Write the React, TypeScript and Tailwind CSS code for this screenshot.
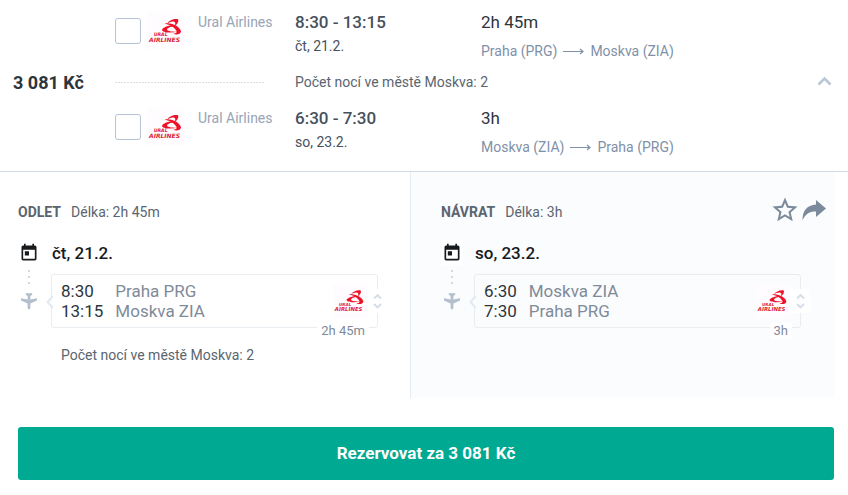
import { MdToday, MdStarBorder } from "react-icons/md";

type Leg = {
    heading: string;
    date: string;
    depart: string;
    arrive: string;
    duration: string;
    from: { city: string; code: string };
    to: { city: string; code: string };
    nights?: number;
};

const outbound: Leg = {
    heading: "ODLET",
    date: "čt, 21.2.",
    depart: "8:30",
    arrive: "13:15",
    duration: "2h 45m",
    from: { city: "Praha", code: "PRG" },
    to: { city: "Moskva", code: "ZIA" },
    nights: 2,
};

const inbound: Leg = {
    heading: "NÁVRAT",
    date: "so, 23.2.",
    depart: "6:30",
    arrive: "7:30",
    duration: "3h",
    from: { city: "Moskva", code: "ZIA" },
    to: { city: "Praha", code: "PRG" },
};

const AirlineLogo = ({ className }: { className: string }) => (
    <svg viewBox="0 0 114 114" className={className} role="img" aria-label="Ural Airlines">
        <rect width="114" height="114" fill="#fefcfe" />
        <g fill="#ee1228">
            <path d="M53 35C74 30 99 45 102 58C101 69 86 69 77 65C86 65 91 61 88 56C83 46 70 38 53 35Z" />
            <path d="M60 35C66 26 82 19 93 22C96 29 91 37 82 43C86 36 86 31 82 29C74 27 66 31 60 35Z" />
            <path d="M80 39C64 40 49 46 45 53C46 61 66 64 94 59C78 59 62 58 60 53C61 48 70 44 82 43Z" />
        </g>
        <text
            fill="#e0243a"
            fontFamily="'DejaVu Sans', sans-serif"
            fontWeight="700"
            fontStyle="italic"
        >
            <tspan x="20" y="73" fontSize="14">URAL</tspan>
            <tspan x="6" y="91" fontSize="18">AIRLINES</tspan>
        </text>
    </svg>
);

const RouteArrow = () => (
    <svg viewBox="0 0 21 8" className="h-2 w-[21px]" fill="none" stroke="#7f91a8" aria-hidden>
        <path d="M0 4.5H20M17 2L20 4.5L17 7" strokeWidth="1.2" />
    </svg>
);

const PlaneIcon = () => (
    <svg viewBox="0 0 18 18" className="size-[18px]" fill="#b3bfcc" aria-hidden>
        <path d="M9 17.5C8.1 17.5 7.6 16 7.6 15V11.4L1 8.4V6.2L7.6 7.6V4L5.8 2.8V1.3H12.2V2.8L10.4 4V7.6L17 6.2V8.4L10.4 11.4V15C10.4 16 9.9 17.5 9 17.5Z" />
    </svg>
);

const ShareIcon = () => (
    <svg viewBox="0 0 24 22" className="h-[22px] w-6" fill="#7b8b9b" aria-hidden>
        <path d="M14 1L24 9.5L14 18V12.6C8 12.4 3.5 14.5 0.6 21.5C0 12.5 5 5.9 14 5.5Z" />
    </svg>
);

const LegSummary = ({ leg }: { leg: Leg }) => (
    <div className="flex items-start">
        <label className="mt-1.5 flex">
            <input
                type="checkbox"
                aria-label={`${leg.heading} Ural Airlines`}
                className="size-[26px] appearance-none rounded-[3px] border border-[#b4c4d6] bg-white"
            />
        </label>
        <AirlineLogo className="ml-1.5 size-[38px]" />
        <p className="ml-[13px] w-[97px] text-sm leading-5 text-[#97a5b5]">Ural Airlines</p>
        <div className="w-[186px]">
            <p className="text-[17px] leading-5 font-medium text-[#46515e]">
                {leg.depart} - {leg.arrive}
            </p>
            <p className="mt-1 text-sm leading-5 text-[#46515e]">{leg.date}</p>
        </div>
        <div>
            <p className="text-[17px] leading-5 text-[#2e353b]">{leg.duration}</p>
            <p className="mt-2 flex items-center gap-1.5 text-sm leading-[22px] text-[#7f91a8]">
                {leg.from.city} ({leg.from.code})
                <RouteArrow />
                {leg.to.city} ({leg.to.code})
            </p>
        </div>
    </div>
);

const LegDetail = ({ leg }: { leg: Leg }) => (
    <>
        <div className="mt-[18px] flex items-center text-[17px] leading-[26px] font-medium text-[#171b1e]">
            <span className="mr-3 flex h-[26px] w-[22px] items-center justify-center bg-white">
                <MdToday className="size-5" aria-hidden />
            </span>
            {leg.date}
        </div>
        <div className="mt-2 flex">
            <div className="flex w-[33px] flex-col pl-0.5">
                <div className="-mt-1 ml-2 flex flex-col gap-1">
                    <span className="size-0.5 bg-[#d3d9e0]" />
                    <span className="size-0.5 bg-[#d3d9e0]" />
                    <span className="size-0.5 bg-[#d3d9e0]" />
                </div>
                <div className="mt-2">
                    <PlaneIcon />
                </div>
            </div>
            <div className="relative flex flex-1 items-center justify-between rounded-[3px] border border-[#e8edf2] py-1.5 pr-2.5 pl-[9px]">
                <svg
                    viewBox="0 0 7 14"
                    className="absolute top-5 -left-1.5 h-3.5 w-[7px]"
                    fill="#fcfdfe"
                    stroke="#e3e9f0"
                    aria-hidden
                >
                    <path d="M7 1L1.5 7L7 13" strokeWidth="2" />
                </svg>
                <div className="grid grid-cols-[auto_auto] gap-x-3 text-[17px] leading-5">
                    <span className="text-[#2e353b]">{leg.depart}</span>
                    <span className="text-[#7f8b99]">{leg.from.city} {leg.from.code}</span>
                    <span className="text-[#2e353b]">{leg.arrive}</span>
                    <span className="text-[#7f8b99]">{leg.to.city} {leg.to.code}</span>
                </div>
                <AirlineLogo className="size-[34px]" />
                <button
                    type="button"
                    aria-label="Detail letu"
                    className="absolute top-3.5 -right-2.5 flex h-6 w-5 items-center justify-center bg-white"
                >
                    <svg viewBox="0 0 10 16" className="h-4 w-2.5" fill="none" stroke="#d3dde8">
                        <path d="M2 5.5L5.5 2L9 5.5M2 11L5.5 14.5L9 11" strokeWidth="1.8" />
                    </svg>
                </button>
                <span className="absolute right-2 -bottom-3 bg-white px-1 text-[13px] leading-4 text-[#7f8b99]">
                    {leg.duration}
                </span>
            </div>
        </div>
        {leg.nights && (
            <p className="mt-[17px] pl-[43px] text-sm leading-5 text-[#5a6570]">
                Počet nocí ve městě {leg.to.city}: {leg.nights}
            </p>
        )}
    </>
);

const LegHeading = ({ leg }: { leg: Leg }) => (
    <h2 className="flex gap-2.5 text-sm leading-5 text-[#5a6570]">
        <span className="font-bold">{leg.heading}</span>
        <span>Délka: {leg.duration}</span>
    </h2>
);

const App = () => (
    <main className="bg-white font-['Roboto',sans-serif]">
        <section className="flex items-center border-b border-[#d3dbe3] pt-3 pr-4 pb-[13px] pl-[13px]">
            <p className="w-[102px] pb-1 text-lg leading-6 font-bold text-[#2e353b]">3 081 Kč</p>
            <div className="flex-1">
                <LegSummary leg={outbound} />
                <div className="flex items-center pt-2.5 pb-4">
                    <div className="mr-[30px] h-px w-[150px] bg-[repeating-linear-gradient(90deg,#d9dfe5_0_2px,transparent_2px_3px)]" />
                    <p className="text-sm leading-5 text-[#5a6570]">Počet nocí ve městě Moskva: 2</p>
                </div>
                <LegSummary leg={inbound} />
            </div>
            <button type="button" aria-label="Sbalit" className="pb-2">
                <svg viewBox="0 0 15 10" className="h-2.5 w-[15px]" fill="none" stroke="#b9c6d6">
                    <path d="M1.5 8.5L7.5 2.5L13.5 8.5" strokeWidth="2.6" />
                </svg>
            </button>
        </section>

        <section className="grid grid-cols-[410fr_424fr] pr-3.5">
            <div className="pt-[30px] pr-8 pb-[33px] pl-[18px]">
                <LegHeading leg={outbound} />
                <LegDetail leg={outbound} />
            </div>
            <div className="border-l border-[#e8edf2] bg-[#fbfcfe] pt-[30px] pr-[33px] pb-[33px] pl-[30px]">
                <div className="-mr-7 flex h-5 items-center justify-between">
                    <LegHeading leg={inbound} />
                    <div className="flex items-center gap-0.5 pr-[3px] pb-1 text-[#7b8b9b]">
                        <button type="button" aria-label="Uložit">
                            <MdStarBorder className="size-[30px]" />
                        </button>
                        <button type="button" aria-label="Sdílet">
                            <ShareIcon />
                        </button>
                    </div>
                </div>
                <LegDetail leg={inbound} />
            </div>
        </section>

        <div className="pt-[29px] pr-3.5 pb-[15px] pl-[18px]">
            <button
                type="button"
                className="h-[53px] w-full rounded-[3px] bg-[#00a991] text-[17px] font-bold text-white"
            >
                Rezervovat za 3 081 Kč
            </button>
        </div>
    </main>
);

export default App;
